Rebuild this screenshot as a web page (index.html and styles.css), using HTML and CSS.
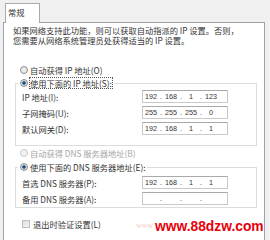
FILE: index.html
```html
<!DOCTYPE html>
<html lang="zh-CN">
<head>
<meta charset="utf-8">
<title>Internet 协议版本 4 (TCP/IPv4) 属性</title>
<link rel="stylesheet" href="styles.css">
</head>
<body>
<div class="tabs"><div class="tab">常规</div></div>
<div class="panel">
  <p class="intro">如果网络支持此功能，则可以获取自动指派的 IP 设置。否则，<br>您需要从网络系统管理员处获得适当的 IP 设置。</p>

  <div class="opt opt-top"><span class="radio"></span><span>自动获得 IP 地址(O)</span></div>

  <fieldset class="group group-ip">
    <legend class="opt"><span class="radio checked"></span><span class="focus">使用下面的 IP 地址(S):</span></legend>
    <div class="row"><span class="lbl">IP 地址(I):</span>
      <div class="ip"><span class="seg">192</span><span class="dot">.</span><span class="seg">168</span><span class="dot">.</span><span class="seg">1</span><span class="dot">.</span><span class="seg">123</span></div></div>
    <div class="row"><span class="lbl">子网掩码(U):</span>
      <div class="ip"><span class="seg">255</span><span class="dot">.</span><span class="seg">255</span><span class="dot">.</span><span class="seg">255</span><span class="dot">.</span><span class="seg">0</span></div></div>
    <div class="row"><span class="lbl">默认网关(D):</span>
      <div class="ip"><span class="seg">192</span><span class="dot">.</span><span class="seg">168</span><span class="dot">.</span><span class="seg">1</span><span class="dot">.</span><span class="seg">1</span></div></div>
  </fieldset>

  <div class="opt opt-dns disabled"><span class="radio"></span><span>自动获得 DNS 服务器地址(B)</span></div>

  <fieldset class="group group-dns">
    <legend class="opt"><span class="radio checked"></span><span>使用下面的 DNS 服务器地址(E):</span></legend>
    <div class="row"><span class="lbl">首选 DNS 服务器(P):</span>
      <div class="ip"><span class="seg">192</span><span class="dot">.</span><span class="seg">168</span><span class="dot">.</span><span class="seg">1</span><span class="dot">.</span><span class="seg">1</span></div></div>
    <div class="row"><span class="lbl">备用 DNS 服务器(A):</span>
      <div class="ip"><span class="seg"></span><span class="dot">.</span><span class="seg"></span><span class="dot">.</span><span class="seg"></span><span class="dot">.</span><span class="seg"></span></div></div>
  </fieldset>

  <div class="check-row"><span class="checkbox"></span><span>退出时验证设置(L)</span></div>
</div>
<div class="wm-faint">www</div>
<div class="wm">www.88dzw.com</div>
</body>
</html>
```

FILE: styles.css
```css
* { box-sizing: border-box; }
html, body { margin: 0; padding: 0; }
body {
  width: 270px;
  height: 240px;
  overflow: hidden;
  position: relative;
  background: #f0f0f0;
  font-family: "Noto Sans CJK SC", sans-serif;
  font-size: 8.25px;
  line-height: 10px;
  color: #333;
}
.tabs { height: 22px; padding: 3px 0 0 5px; }
.tab {
  position: relative;
  z-index: 1;
  width: 35px;
  height: 20px;
  border: 1px solid #a9a9a9;
  border-bottom: none;
  background: #fff;
  padding: 3px 0 0 2px;
}
.panel {
  margin-left: 3px;
  width: 262px;
  height: 218px;
  border: 1px solid #a0a0a0;
  border-bottom: none;
  background: #fff;
  padding: 2px 0 0 9px;
}
.intro { margin: 0; }
.opt { display: flex; align-items: center; height: 10px; }
.opt-top { margin: 20px 0 0 7px; }
.opt-dns { margin: 2px 0 0 7px; }
.disabled { color: #a6a6a6; }
.radio {
  width: 8px;
  height: 8px;
  margin-right: 2px;
  border-radius: 50%;
  border: 1px solid #8e8f8f;
  background: radial-gradient(circle at 50% 50%, #f4f4f4 0, #dcdcdc 100%);
  flex: none;
}
.radio.checked {
  background: radial-gradient(circle at 50% 50%, #1d3b5e 0, #2f5f8f 35%, #cfd8e2 45%, #e8e8e8 100%);
}
.disabled .radio { border-color: #c8c8c8; background: #f2f2f2; }
.focus { outline: 1px dotted #555; outline-offset: 0; }
.group {
  width: 242px;
  margin: 3px 0 0 2px;
  border: 1px solid #dcdcdc;
  padding: 2px 6px 10px 6px;
  min-width: 0;
}
.group legend { padding: 0 2px; margin-left: -4px; }
.group-dns { margin-top: 4px; padding: 4px 6px 2px 6px; }
.row {
  display: grid;
  grid-template-columns: 120px 86px;
  align-items: center;
  height: 13px;
}
.row + .row { margin-top: 3px; }
.ip {
  height: 13px;
  border: 1px solid #c9c9c9;
  border-top-color: #a9a9a9;
  background: #fff;
  display: flex;
  align-items: center;
  font-family: "Liberation Sans", sans-serif;
  font-size: 7.2px;
  color: #333;
}
.seg { width: 16px; text-align: center; }
.dot { width: 4px; text-align: center; }
.check-row { display: flex; align-items: center; height: 10px; margin: 11px 0 0 9px; }
.checkbox {
  width: 8px;
  height: 8px;
  margin-right: 3px;
  border: 1px solid #bdbdbd;
  background: linear-gradient(135deg, #dedede, #f6f6f6);
}
.wm {
  position: absolute;
  left: 155px;
  top: 219px;
  font-family: "Liberation Sans", sans-serif;
  font-weight: bold;
  font-size: 13.8px;
  line-height: 16px;
  color: #e8000b;
}
.wm-faint {
  position: absolute;
  left: 136px;
  top: 221px;
  font-family: "Liberation Serif", serif;
  font-size: 8px;
  line-height: 10px;
  color: #f3c9c9;
}
```
